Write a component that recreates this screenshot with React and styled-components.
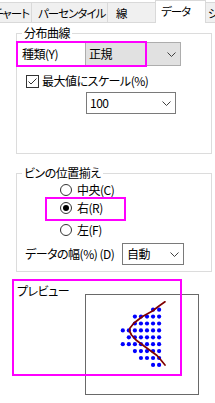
import React from 'react';
import styled, { createGlobalStyle } from 'styled-components';

const GlobalStyle = createGlobalStyle`
  html, body {
    margin: 0;
    padding: 0;
    background: #fff;
  }
  body {
    font-family: "Noto Sans CJK JP", "Noto Sans", sans-serif;
    font-size: 12px;
    color: #000;
  }
`;

const Window = styled.div`
  position: relative;
  width: 215px;
  height: 403px;
  overflow: hidden;
  background: #fff;
  font-feature-settings: "palt";
  letter-spacing: -0.5px;
  line-height: 14px;
`;

const TabBar = styled.div`
  box-sizing: border-box;
  display: flex;
  align-items: flex-end;
  height: 23px;
  margin-left: -12px;
  border-bottom: 1px solid #d9d9d9;
`;

const Tab = styled.div`
  position: relative;
  z-index: ${({ $active }) => ($active ? 1 : 0)};
  box-sizing: border-box;
  flex: none;
  display: flex;
  align-items: center;
  width: ${({ $w }) => $w}px;
  height: ${({ $active }) => ($active ? 23 : 20)}px;
  margin-left: -1px;
  margin-bottom: ${({ $active }) => ($active ? -1 : 0)}px;
  padding: 0 0 ${({ $active }) => ($active ? 3 : 0)}px ${({ $pad }) => $pad}px;
  background: ${({ $active }) => ($active ? '#fff' : '#f0f0f0')};
  border: 1px solid #d9d9d9;
  border-bottom: none;
  font-size: 11.5px;
  letter-spacing: -1px;
  white-space: nowrap;
  overflow: hidden;
`;

const Panel = styled.div`
  padding: 3px 0 0 16px;
`;

const Group = styled.fieldset`
  box-sizing: border-box;
  width: 196px;
  margin: ${({ $top }) => $top}px 0 0 0;
  padding: 0;
  border: 1px solid #dcdcdc;
  min-inline-size: auto;
`;

const Legend = styled.legend`
  margin-left: ${({ $left }) => $left}px;
  padding: 0 2px;
  line-height: 14px;
`;

const GroupBody = styled.div`
  padding: 0 0 ${({ $bottom }) => $bottom}px 5px;
`;

const Field = styled.div`
  display: flex;
  align-items: center;
  margin-top: ${({ $top }) => $top}px;
  padding-left: ${({ $indent = 0 }) => $indent}px;
`;

const FieldLabel = styled.span`
  flex: none;
  width: ${({ $w }) => $w}px;
  white-space: nowrap;
`;

const SelectBox = styled.div`
  box-sizing: border-box;
  display: flex;
  align-items: center;
  justify-content: space-between;
  width: ${({ $w }) => $w}px;
  height: ${({ $h }) => $h}px;
  padding: 0 4px 0 ${({ $padLeft = 3 }) => $padLeft}px;
  background: ${({ $flat }) => ($flat ? '#e1e1e1' : '#fff')};
  border: 1px solid ${({ $flat }) => ($flat ? '#adadad' : '#7a7a7a')};
`;

const CheckRow = styled.label`
  display: flex;
  align-items: center;
  height: 14px;
  margin-top: ${({ $top }) => $top}px;
  padding-left: 4px;
`;

const CheckBox = styled.span`
  box-sizing: border-box;
  display: flex;
  align-items: center;
  justify-content: center;
  width: 13px;
  height: 13px;
  margin-right: 3px;
  border: 1px solid #333;
  background: #fff;
`;

const RadioRow = styled.label`
  display: flex;
  align-items: center;
  height: 14px;
  margin-top: ${({ $top }) => $top}px;
  padding-left: 38px;
`;

const RadioDot = styled.span`
  box-sizing: border-box;
  position: relative;
  flex: none;
  width: 12px;
  height: 12px;
  margin-right: 5px;
  border: 1px solid #333;
  border-radius: 50%;
  background: #fff;

  &::after {
    content: '';
    display: ${({ $checked }) => ($checked ? 'block' : 'none')};
    position: absolute;
    left: 2px;
    top: 2px;
    width: 6px;
    height: 6px;
    border-radius: 50%;
    background: #000;
  }
`;

const PreviewArea = styled.div`
  display: grid;
  grid-template-columns: 69px auto;
  align-items: start;
  margin-top: 12px;
`;

const PreviewLabel = styled.span`
  padding-left: 1px;
  white-space: nowrap;
`;

const PreviewFrame = styled.div`
  box-sizing: border-box;
  width: 114px;
  height: 101px;
  margin-top: 10px;
  border: 1px solid #696969;
  background: #fff;

  svg {
    display: block;
  }
`;

const Highlight = styled.div`
  position: absolute;
  box-sizing: border-box;
  left: ${({ $x }) => $x}px;
  top: ${({ $y }) => $y}px;
  width: ${({ $w }) => $w}px;
  height: ${({ $h }) => $h}px;
  border: 2px solid #ff00ff;
  pointer-events: none;
`;

const Chevron = () => (
  <svg width="9" height="5" viewBox="0 0 9 5">
    <polyline points="0.5,0.5 4.5,4.5 8.5,0.5" fill="none" stroke="#404040" strokeWidth="1" />
  </svg>
);

const Select = ({ value, ...rest }) => (
  <SelectBox {...rest}>
    <span>{value}</span>
    <Chevron />
  </SelectBox>
);

const tabs = [
  { label: 'チャート', w: 45, pad: 5 },
  { label: 'パーセンタイル', w: 77, pad: 6 },
  { label: '線', w: 49, pad: 8 },
  { label: 'データ', w: 51, pad: 5, active: true },
  { label: 'シ', w: 45, pad: 2 },
];

const counts = [2, 5, 5, 7, 6, 7, 5, 4, 2];
const dots = counts.flatMap((n, row) =>
  Array.from({ length: n }, (_, k) => ({
    x: 122.8 + 6.05 * (7 - n + k),
    y: 309.7 + 6.9 * row,
  }))
);

const curve = [
  [165, 301.8], [159, 306], [152.5, 311], [142.5, 316.5], [134, 323],
  [130, 328], [129.5, 331], [131.5, 335], [136, 340], [144, 346],
  [151.5, 351.5], [157, 355.5], [160.5, 359.5], [165, 365],
].map(([x, y]) => `${x},${y}`).join(' ');

const Preview = () => (
  <svg width="112" height="99" viewBox="86 295 112 99">
    {dots.map((d, i) => (
      <circle key={i} cx={d.x} cy={d.y} r="2.1" fill="#0000ff" />
    ))}
    <polyline
      points={curve}
      fill="none"
      stroke="#800000"
      strokeWidth="1.7"
      strokeLinejoin="round"
      strokeLinecap="round"
    />
  </svg>
);

export default function App() {
  return (
    <Window>
      <GlobalStyle />
      <TabBar>
        {tabs.map((t) => (
          <Tab key={t.label} $w={t.w} $pad={t.pad} $active={t.active}>
            {t.label}
          </Tab>
        ))}
      </TabBar>

      <Panel>
        <Group $top={0}>
          <Legend $left={5}>分布曲線</Legend>
          <GroupBody $bottom={39}>
            <Field $top={2}>
              <FieldLabel $w={63}>種類(Y)</FieldLabel>
              <Select value="正規" $w={96} $h={24} $flat />
            </Field>
            <CheckRow $top={8}>
              <CheckBox>
                <svg width="11" height="11" viewBox="0 0 11 11">
                  <polyline points="1.5,5.5 4,8 9.5,2.5" fill="none" stroke="#333" strokeWidth="1" />
                </svg>
              </CheckBox>
              最大値にスケール(%)
            </CheckRow>
            <Field $top={4} $indent={64}>
              <Select value="100" $w={90} $h={22} />
            </Field>
          </GroupBody>
        </Group>

        <Group $top={12}>
          <Legend $left={5}>ビンの位置揃え</Legend>
          <GroupBody $bottom={6}>
            <RadioRow $top={3}>
              <RadioDot />
              中央(C)
            </RadioRow>
            <RadioRow $top={4}>
              <RadioDot $checked />
              右(R)
            </RadioRow>
            <RadioRow $top={8}>
              <RadioDot />
              左(F)
            </RadioRow>
            <Field $top={6} $indent={3}>
              <FieldLabel $w={97}>データの幅(%) (D)</FieldLabel>
              <Select value="自動" $w={62} $h={22} $padLeft={4} />
            </Field>
          </GroupBody>
        </Group>

        <PreviewArea>
          <PreviewLabel>プレビュー</PreviewLabel>
          <PreviewFrame>
            <Preview />
          </PreviewFrame>
        </PreviewArea>
      </Panel>

      <Highlight $x={16} $y={41} $w={131} $h={26} />
      <Highlight $x={45} $y={197} $w={81} $h={24} />
      <Highlight $x={12} $y={279} $w={170} $h={97} />
    </Window>
  );
}
